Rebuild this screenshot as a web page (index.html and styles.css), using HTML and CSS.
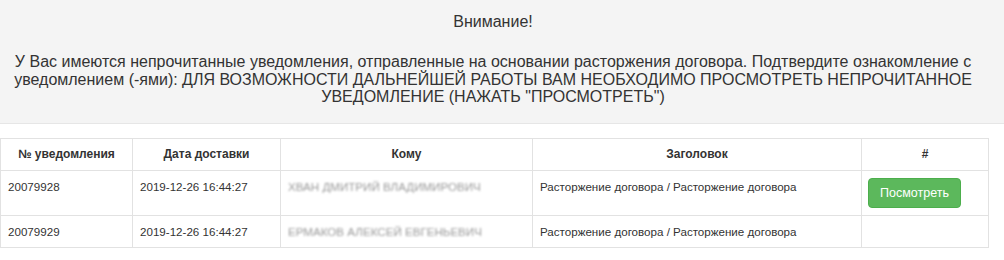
FILE: index.html
```html
<!DOCTYPE html>
<html lang="ru">
<head>
    <meta charset="UTF-8">
    <meta name="viewport" content="width=device-width, initial-scale=1.0">
    <title>Уведомления</title>
    <link rel="stylesheet" href="styles.css">
</head>
<body>
    <div class="alert-panel">
        <div class="alert-title">Внимание!</div>
        <div class="alert-text">
            У Вас имеются непрочитанные уведомления, отправленные на основании расторжения договора. Подтвердите ознакомление с уведомлением (-ями): ДЛЯ ВОЗМОЖНОСТИ ДАЛЬНЕЙШЕЙ РАБОТЫ ВАМ НЕОБХОДИМО ПРОСМОТРЕТЬ НЕПРОЧИТАННОЕ УВЕДОМЛЕНИЕ (НАЖАТЬ "ПРОСМОТРЕТЬ")
        </div>
    </div>

    <table class="notice-table">
        <colgroup>
            <col class="col-num">
            <col class="col-date">
            <col class="col-to">
            <col class="col-title">
            <col class="col-action">
        </colgroup>
        <thead>
            <tr>
                <th>№ уведомления</th>
                <th>Дата доставки</th>
                <th>Кому</th>
                <th>Заголовок</th>
                <th>#</th>
            </tr>
        </thead>
        <tbody>
            <tr>
                <td>20079928</td>
                <td>2019-12-26 16:44:27</td>
                <td><span class="hidden-name">ХВАН ДМИТРИЙ ВЛАДИМИРОВИЧ</span></td>
                <td>Расторжение договора / Расторжение договора</td>
                <td><button class="btn-view">Посмотреть</button></td>
            </tr>
            <tr>
                <td>20079929</td>
                <td>2019-12-26 16:44:27</td>
                <td><span class="hidden-name">ЕРМАКОВ АЛЕКСЕЙ ЕВГЕНЬЕВИЧ</span></td>
                <td>Расторжение договора / Расторжение договора</td>
                <td></td>
            </tr>
        </tbody>
    </table>
</body>
</html>
```

FILE: styles.css
```css
body {
    font-family: 'Liberation Sans', Arial, sans-serif;
    color: #333;
    background-color: #fff;
    margin: 0;
}

/* Блок предупреждения */
.alert-panel {
    background-color: #f4f4f4;
    border-bottom: 1px solid #e6e6e6;
    padding: 13px 28px 17px 10px;
    text-align: center;
    font-size: 16px;
    line-height: 17.5px;
}

.alert-title {
    margin-bottom: 22.5px;
}

/* Таблица уведомлений */
.notice-table {
    border-collapse: collapse;
    table-layout: fixed;
    width: 988px;
    margin-top: 14px;
    font-size: 11.6px;
    line-height: 17px;
}

.col-num { width: 132px; }
.col-date { width: 148px; }
.col-to { width: 252px; }
.col-title { width: 329px; }
.col-action { width: 127px; }

.notice-table th,
.notice-table td {
    border: 1px solid #e2e2e2;
    padding: 7px;
    vertical-align: top;
    text-align: left;
}

.notice-table th {
    text-align: center;
    font-weight: bold;
    font-size: 12px;
}

.hidden-name {
    color: #999;
    filter: blur(1.2px);
}

.btn-view {
    font-family: 'Liberation Sans', Arial, sans-serif;
    font-size: 12.5px;
    line-height: 16px;
    color: #fff;
    background-color: #5cb85c;
    border: 1px solid #4cae4c;
    border-radius: 4px;
    padding: 6px 11px;
    width: 93px;
    margin: 0 0 0 -1px;
    cursor: pointer;
}
```
